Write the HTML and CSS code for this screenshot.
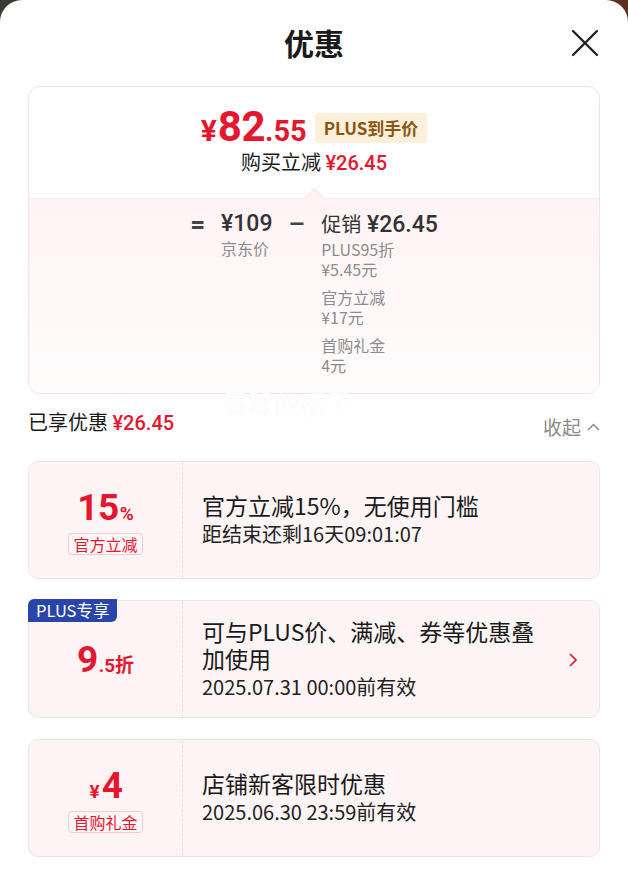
FILE: index.html
```html
<!DOCTYPE html>
<html lang="zh-CN">
<head>
<meta charset="utf-8">
<title>优惠</title>
<link rel="stylesheet" href="styles.css">
</head>
<body>
<div class="sheet">
  <header class="hdr">
    <h1 class="hdr-title">优惠</h1>
    <button class="close" aria-label="关闭">
      <svg width="28" height="28" viewBox="0 0 28 28"><path d="M2 2L26 26M26 2L2 26" stroke="#222" stroke-width="2.4" fill="none" stroke-linecap="round"/></svg>
    </button>
  </header>

  <section class="summary">
    <div class="summary-top">
      <div class="price-line">
        <span class="price"><span class="p-yen">¥</span><span class="p-int">82</span><span class="p-dec">.55</span></span>
        <span class="plus-badge">PLUS到手价</span>
      </div>
      <div class="save-line">购买立减 <span class="red">¥26.45</span></div>
    </div>
    <div class="summary-bottom">
      <div class="calc">
        <span class="op">=</span>
        <div class="term">
          <div class="term-val">¥109</div>
          <div class="term-label">京东价</div>
        </div>
        <span class="op op-minus">–</span>
        <div class="term">
          <div class="term-val"><span class="cn">促销</span> ¥26.45</div>
          <div class="sub-group"><div class="sub-line">PLUS95折</div><div class="sub-line">¥5.45元</div></div>
          <div class="sub-group"><div class="sub-line">官方立减</div><div class="sub-line">¥17元</div></div>
          <div class="sub-group"><div class="sub-line">首购礼金</div><div class="sub-line">4元</div></div>
        </div>
      </div>
    </div>
  </section>

  <div class="watermark">暴躁的橘子</div>

  <div class="enjoyed">
    <div class="enjoyed-l">已享优惠 <span class="red num">¥26.45</span></div>
    <div class="collapse">收起
      <svg width="13" height="8" viewBox="0 0 13 8"><path d="M1 7L6.5 1.5L12 7" stroke="#8a8a8a" stroke-width="1.5" fill="none"/></svg>
    </div>
  </div>

  <div class="coupons">
    <div class="coupon">
      <div class="c-left">
        <div class="c-val"><span class="v-big">15</span><span class="v-small">%</span></div>
        <div class="c-tag">官方立减</div>
      </div>
      <div class="c-right">
        <div class="c-title">官方立减15%，无使用门槛</div>
        <div class="c-sub">距结束还剩16天09:01:07</div>
      </div>
    </div>

    <div class="coupon">
      <span class="plus-tag">PLUS专享</span>
      <div class="c-left">
        <div class="c-val"><span class="v-big">9</span><span class="v-small">.5折</span></div>
      </div>
      <div class="c-right c-right-arrow">
        <div class="c-title">可与PLUS价、满减、券等优惠叠加使用</div>
        <div class="c-sub">2025.07.31 00:00前有效</div>
      </div>
      <svg class="chev" width="10" height="16" viewBox="0 0 10 16"><path d="M2 2L8 8L2 14" stroke="#e5172f" stroke-width="1.7" fill="none"/></svg>
    </div>

    <div class="coupon">
      <div class="c-left">
        <div class="c-val"><span class="v-small v-yen">¥</span><span class="v-big">4</span></div>
        <div class="c-tag">首购礼金</div>
      </div>
      <div class="c-right">
        <div class="c-title">店铺新客限时优惠</div>
        <div class="c-sub">2025.06.30 23:59前有效</div>
      </div>
    </div>
  </div>
</div>
</body>
</html>
```
FILE: styles.css
```css
* { box-sizing: border-box; }
html, body { margin: 0; padding: 0; }
body {
  background: linear-gradient(90deg, #3b3a33 0%, #4a3528 60%, #5c2f1d 100%);
  font-family: "Noto Sans CJK SC", "Noto Sans", sans-serif;
  color: #1a1a1a;
  width: 628px;
  height: 870px;
  overflow: hidden;
}
.sheet {
  position: relative;
  background: #fff;
  border-radius: 22px 22px 0 0;
  height: 870px;
}
.red { color: #e5172f; }

/* header */
.hdr {
  position: relative;
  height: 86px;
  display: flex;
  align-items: center;
  justify-content: center;
}
.hdr-title {
  margin: 0;
  font-size: 30px;
  font-weight: 700;
  color: #1a1a1a;
  line-height: 1;
  margin-top: -2px;
}
.close {
  position: absolute;
  right: 29px;
  top: 29px;
  width: 28px;
  height: 28px;
  padding: 0;
  border: 0;
  background: none;
}

/* summary card */
.summary {
  margin: 0 28px;
  border: 1px solid #f6e0e4;
  border-radius: 12px;
  overflow: hidden;
}
.summary-top {
  height: 111px;
  padding-top: 19px;
  display: flex;
  flex-direction: column;
  align-items: center;
  position: relative;
}
.price-line {
  height: 44px;
  display: flex;
  align-items: center;
  gap: 8px;
}
.price {
  font-family: Roboto, "Noto Sans", sans-serif;
  font-weight: 700;
  color: #e5172f;
  display: flex;
  align-items: baseline;
  line-height: 1;
  margin-top: -2px;
}
.p-yen { font-size: 30px; margin-right: 1px; }
.p-int { font-size: 42px; letter-spacing: -0.5px; }
.p-dec { font-size: 29px; }
.plus-badge {
  background: #fdf0da;
  color: #8a5614;
  font-size: 17px;
  font-weight: 700;
  line-height: 30px;
  height: 30px;
  padding: 0 9px;
  border-radius: 3px;
}
.save-line {
  height: 24px;
  line-height: 24px;
  font-size: 20px;
  color: #1a1a1a;
}
.save-line .red { font-family: Roboto, "Noto Sans", sans-serif; font-weight: 500; font-size: 20px; }

.summary-bottom {
  position: relative;
  background: linear-gradient(180deg, #fff3f5 0%, #fff8f9 60%, #fffcfc 100%);
  border-top: 1px solid #fbe8eb;
  padding: 11px 0 18px;
}
.summary-bottom::before {
  content: "";
  position: absolute;
  left: 50%;
  top: -8px;
  width: 14px;
  height: 14px;
  margin-left: -7px;
  background: #fff3f5;
  border-top: 1px solid #fbe2e6;
  border-left: 1px solid #fbe2e6;
  transform: rotate(45deg);
}
.calc {
  display: flex;
  justify-content: center;
  gap: 16px;
  color: #333;
}
.op {
  font-size: 26px;
  line-height: 28px;
  font-weight: 700;
  color: #444;
  font-family: Roboto, sans-serif;
}
.op-minus { font-weight: 500; }
.term { display: flex; flex-direction: column; }
.term-val {
  font-family: Roboto, "Noto Sans CJK SC", sans-serif;
  font-size: 23px;
  line-height: 28px;
  font-weight: 500;
  color: #333;
}
.term-val .cn { font-family: "Noto Sans CJK SC", sans-serif; font-size: 20px; font-weight: 400; }
.term-label, .sub-line {
  font-size: 16px;
  line-height: 20px;
  height: 20px;
  color: #8c8c8c;
}
.sub-group + .sub-group { margin-top: 8px; }

/* watermark */
.watermark {
  position: absolute;
  left: 222px;
  top: 387px;
  font-size: 26px;
  line-height: 32px;
  color: rgba(255, 255, 255, 0.96);
  text-shadow: 0 0 1px rgba(0, 0, 0, 0.07);
  pointer-events: none;
}

/* enjoyed row */
.enjoyed {
  display: flex;
  justify-content: space-between;
  align-items: flex-start;
  padding: 13px 28px 0;
  height: 67px;
}
.enjoyed-l { font-size: 20px; line-height: 30px; color: #1a1a1a; }
.enjoyed-l .num { font-family: Roboto, sans-serif; font-weight: 500; }
.collapse {
  margin-top: 5px;
  font-size: 19px;
  line-height: 30px;
  color: #8a8a8a;
  display: flex;
  align-items: center;
  gap: 6px;
}

/* coupons */
.coupons {
  display: flex;
  flex-direction: column;
  gap: 21px;
  padding: 0 28px;
}
.coupon {
  position: relative;
  height: 118px;
  background: #fdf4f5;
  border: 1px solid #f6e2e5;
  border-radius: 10px;
  display: grid;
  grid-template-columns: 154px 1fr;
}
.c-left {
  border-right: 1px dashed #f3d9dd;
  display: flex;
  flex-direction: column;
  align-items: center;
  justify-content: center;
  gap: 5px;
  padding-top: 2px;
}
.c-val {
  color: #e5172f;
  font-family: Roboto, "Noto Sans CJK SC", sans-serif;
  font-weight: 700;
  line-height: 40px;
  height: 40px;
  display: flex;
  align-items: baseline;
}
.v-big { font-size: 37px; letter-spacing: -0.5px; }
.v-small { font-size: 19px; margin-left: 1px; }
.v-yen { margin-right: 2px; }
.c-tag {
  font-size: 16px;
  line-height: 20px;
  color: #e5172f;
  border: 1px solid #f5c9cf;
  background: #fff6f7;
  border-radius: 4px;
  padding: 0 4px;
}
.c-right {
  padding-left: 19px;
  display: flex;
  flex-direction: column;
  justify-content: center;
}
.c-right-arrow { padding-right: 50px; }
.c-title { font-size: 23px; line-height: 27px; color: #1a1a1a; }
.c-sub { font-size: 20px; line-height: 29px; color: #222; }
.plus-tag {
  position: absolute;
  left: -1px;
  top: -2px;
  height: 23px;
  line-height: 23px;
  padding: 0 8px;
  background: #2a45a8;
  color: #fff;
  font-size: 16.5px;
  border-radius: 6px 0 6px 0;
}
.chev {
  position: absolute;
  right: 21px;
  top: 51px;
}
```
